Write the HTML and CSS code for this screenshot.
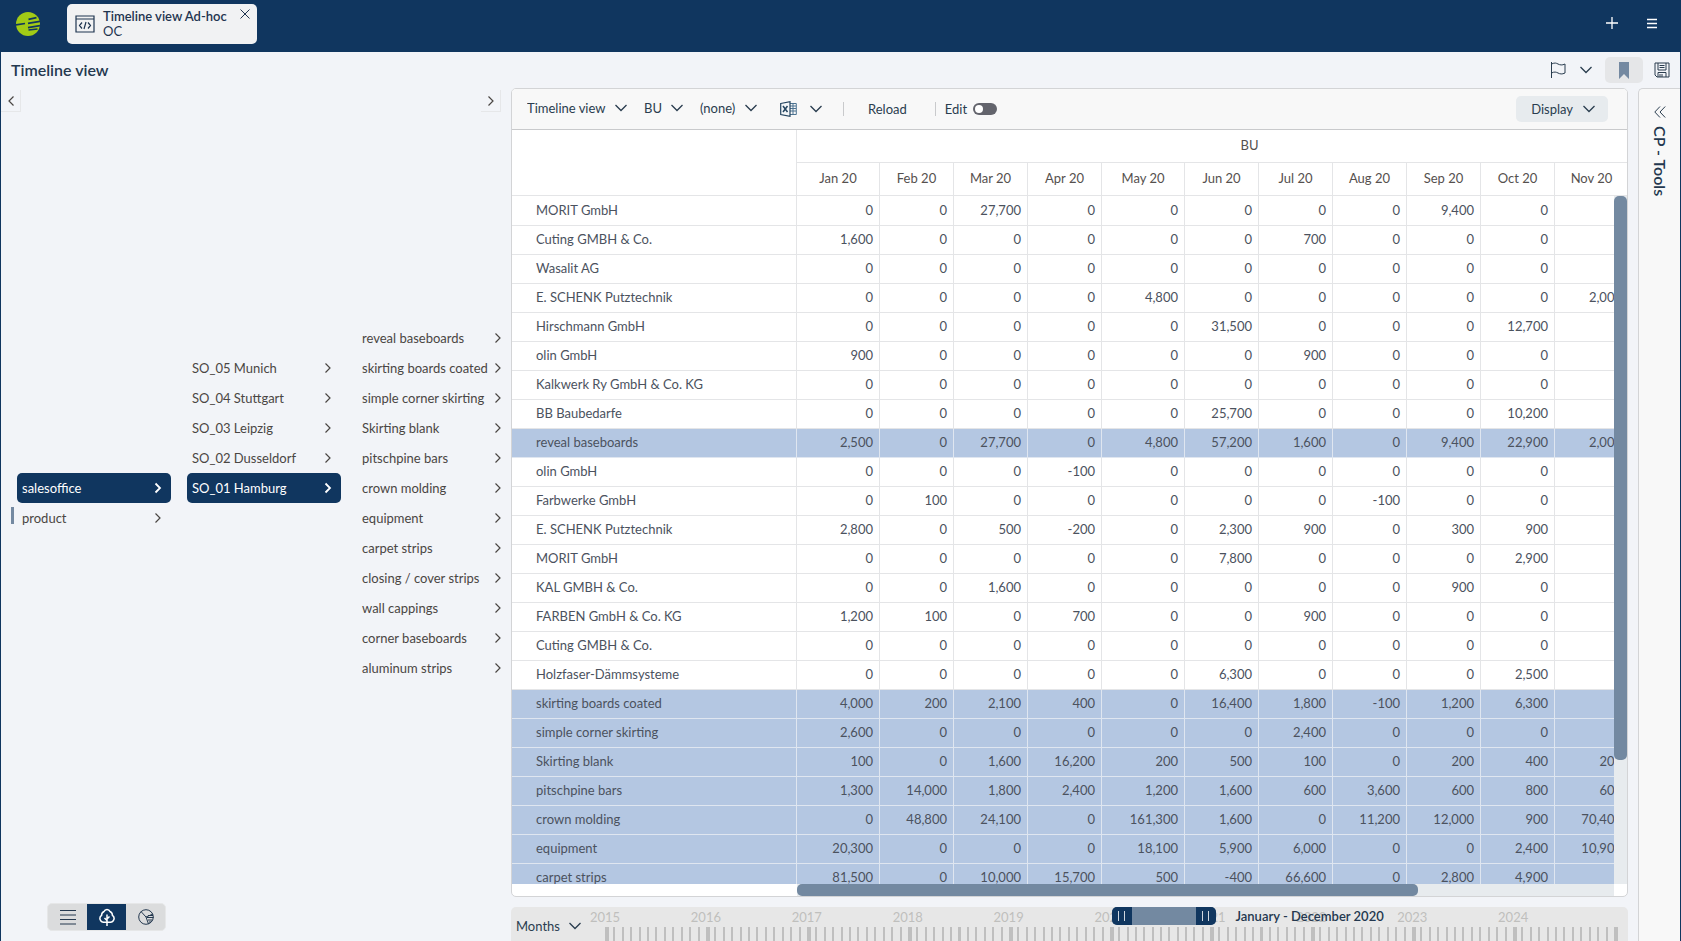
FILE: index.html
```html
<!DOCTYPE html>
<html lang="en">
<head>
<meta charset="utf-8">
<title>Timeline view</title>
<link rel="stylesheet" href="styles.css">
</head>
<body>
<svg class="sprite" aria-hidden="true">
  <symbol id="down" viewBox="0 0 12 8"><path d="M.5 1 6 6.500 11.500 1"/></symbol>
  <symbol id="right" viewBox="0 0 8 12"><path d="M1.500 1.500 6 6 1.500 10.500"/></symbol>
</svg>
<header class="topbar">
  <svg class="logo" viewBox="0 0 24 24" aria-label="Logo"><circle cx="12" cy="12" r="12" fill="#a2cb16"/><path d="M0 12.800 9 11.500M12.500 7.300 20.500 5.600M12 11.300 24 9.400M12 15.600 24 13.700M12.500 18 21.500 17" stroke="#10365f" stroke-width="1.700"/></svg>
  <div class="tab">
    <svg class="tab-icon" viewBox="0 0 20 18"><path d="M1 1H19V17H1ZM1 4H19M7 7.500 4.500 10.500 7 13.500M13 7.500 15.500 10.500 13 13.500M11 7 9 14"/></svg>
    <div class="tab-text"><strong>Timeline view Ad-hoc</strong><span>OC</span></div>
    <button class="tab-close" aria-label="Close tab"><svg viewBox="0 0 10 10"><path d="M.5.5 9.500 9.500M9.500.5.5 9.500"/></svg></button>
  </div>
  <div class="top-actions">
    <button aria-label="New tab"><svg viewBox="0 0 12 12"><path d="M6 0V12M0 6H12"/></svg></button>
    <button aria-label="Menu"><svg viewBox="0 0 12 12"><path d="M1 2.500H11M1 6.500H11M1 10.500H11"/></svg></button>
  </div>
</header>
<div class="app">
  <div class="titlebar">
    <h1>Timeline view</h1>
    <div class="title-actions">
      <button class="flag" aria-label="Flag"><svg class="i16" viewBox="0 0 16 16"><path d="M1.500 0V16M1.500 2C5 .5 6 1 8 2S12 3.500 15 2V11C12 12.500 10 12 8 11S4.500 9.500 1.500 11"/></svg></button>
      <button class="flag-menu" aria-label="Flag options"><svg class="down"><use href="#down"/></svg></button>
      <button class="bookmark" aria-label="Bookmark"><svg viewBox="0 0 10 17"><path d="M0 0H10V17L5 12 0 17Z"/></svg></button>
      <button class="save" aria-label="Save"><svg class="i16" viewBox="0 0 16 16"><path d="M1 1H15V15H3L1 13ZM4 1V8H12V1M5.500 3.500H10.500M5.500 5.500H10.500M4 15V10.500H12V15M6 12V15M8 12V15"/></svg></button>
    </div>
  </div>
  <main class="workspace">
    <nav class="tree-panel">
      <div class="tree-scroll">
        <button aria-label="Scroll left"><svg class="right flip"><use href="#right"/></svg></button>
        <button aria-label="Scroll right"><svg class="right"><use href="#right"/></svg></button>
      </div>
      <div class="tree">
        <div class="branch branch-root">
          <button class="node active">salesoffice<svg class="right"><use href="#right"/></svg></button>
          <button class="node marked">product<svg class="right"><use href="#right"/></svg></button>
        </div>
        <div class="branch branch-office">
          <button class="node">SO_05 Munich<svg class="right"><use href="#right"/></svg></button>
          <button class="node">SO_04 Stuttgart<svg class="right"><use href="#right"/></svg></button>
          <button class="node">SO_03 Leipzig<svg class="right"><use href="#right"/></svg></button>
          <button class="node">SO_02 Dusseldorf<svg class="right"><use href="#right"/></svg></button>
          <button class="node active">SO_01 Hamburg<svg class="right"><use href="#right"/></svg></button>
        </div>
        <div class="branch">
          <button class="node">reveal baseboards<svg class="right"><use href="#right"/></svg></button>
          <button class="node">skirting boards coated<svg class="right"><use href="#right"/></svg></button>
          <button class="node">simple corner skirting<svg class="right"><use href="#right"/></svg></button>
          <button class="node">Skirting blank<svg class="right"><use href="#right"/></svg></button>
          <button class="node">pitschpine bars<svg class="right"><use href="#right"/></svg></button>
          <button class="node">crown molding<svg class="right"><use href="#right"/></svg></button>
          <button class="node">equipment<svg class="right"><use href="#right"/></svg></button>
          <button class="node">carpet strips<svg class="right"><use href="#right"/></svg></button>
          <button class="node">closing / cover strips<svg class="right"><use href="#right"/></svg></button>
          <button class="node">wall cappings<svg class="right"><use href="#right"/></svg></button>
          <button class="node">corner baseboards<svg class="right"><use href="#right"/></svg></button>
          <button class="node">aluminum strips<svg class="right"><use href="#right"/></svg></button>
        </div>
      </div>
      <div class="view-switch">
        <button aria-label="List"><svg class="i16" viewBox="0 0 16 16"><path d="M0 1.500H16M0 6H16M0 10.500H16M0 15H16"/></svg></button>
        <button class="on" aria-label="Tree"><svg viewBox="0 0 16 18"><path d="M8 18V6.500M8 12.500 5.500 10M8 11 10.500 8.500M8 14.200H5.200A3.800 3.800 0 0 1 2.600 7.300 4 4 0 0 1 5 3.500 3.200 3.200 0 0 1 11 3.500 4 4 0 0 1 13.400 7.300 3.800 3.800 0 0 1 10.800 14.200Z"/></svg></button>
        <button aria-label="Chart"><svg class="i16" viewBox="0 0 16 16"><path d="M8 8 3 2.500M8 8 15 5M8 8 10.500 15M9 8.500H15.500M10 11H14.500M11 13H13M10 6.500H15"/><circle cx="8" cy="8" r="7.300"/></svg></button>
      </div>
    </nav>
    <div class="center">
      <section class="panel">
        <div class="toolbar">
          <div class="pick pick-view"><select aria-label="View"><option>Timeline view</option></select><svg class="down"><use href="#down"/></svg></div>
          <div class="pick pick-unit"><select aria-label="Unit"><option>BU</option></select><svg class="down"><use href="#down"/></svg></div>
          <div class="pick pick-filter"><select aria-label="Filter"><option>(none)</option></select><svg class="down"><use href="#down"/></svg></div>
          <button class="export" aria-label="Export to Excel"><svg class="excel" viewBox="0 0 17 16"><path d="M10 2.500H16.300V13.500H10M10 5H16M10 7.500H16M10 10H16M13 2.500V13.500" fill="none" stroke="#4d7391"/><path d="M.7 2.500 10 .7V15.300L.7 13.500Z" fill="#f4f7f9" stroke="#24445f" stroke-width="1.200"/><path d="M3 5 7.500 11M7.500 5 3 11" stroke="#24445f" stroke-width="1.500"/></svg><svg class="down"><use href="#down"/></svg></button>
          <span class="rule"></span>
          <button class="reload">Reload</button>
          <span class="rule"></span>
          <label class="edit">Edit<input type="checkbox"></label>
          <button class="display">Display<svg class="down"><use href="#down"/></svg></button>
        </div>
        <div class="sheet">
          <div class="viewport">
            <table>
              <colgroup><col class="c-name"><col class="c-wide"><col><col><col><col class="c-wide"><col><col><col><col><col><col><col></colgroup>
              <thead>
                <tr><th rowspan="2"></th><th colspan="12">BU</th></tr>
                <tr id="months"></tr>
              </thead>
              <tbody id="rows"></tbody>
            </table>
          </div>
          <div class="vbar"><div class="vthumb"></div></div>
          <div class="hbar"><div class="htrack"><div class="hthumb"></div></div></div>
        </div>
      </section>
      <section class="timeline">
        <div class="pick pick-scale"><select aria-label="Scale"><option>Months</option></select><svg class="down"><use href="#down"/></svg></div>
        <div class="years">
          <div class="year"><span>2015</span></div><div class="year"><span>2016</span></div><div class="year"><span>2017</span></div><div class="year"><span>2018</span></div><div class="year"><span>2019</span></div><div class="year"><span>2020</span></div><div class="year"><span>2021</span></div><div class="year"><span>2022</span></div><div class="year"><span>2023</span></div><div class="year"><span>2024</span></div>
          <div class="range"><div class="slider"><i></i><i></i></div><strong>January - December 2020</strong></div>
        </div>
      </section>
    </div>
    <aside class="tools">
      <button aria-label="Expand tools"><svg viewBox="0 0 12 12"><path d="M6 .5.8 6 6 11.500M11.200.5 6 6 11.200 11.500"/></svg></button>
      <h2>CP - Tools</h2>
    </aside>
  </main>
</div>
<script src="app.js"></script>
</body>
</html>
```
FILE: styles.css
```css
* { box-sizing: border-box; }
body {
  margin: 0;
  height: 100vh;
  display: flex;
  flex-direction: column;
  overflow: hidden;
  background: #f2f4f8;
  color: #2a3d4f;
  font: 13px/20px Lato, "Liberation Sans", sans-serif;
}
button, select, input { font: inherit; color: inherit; margin: 0; }
button { border: 0; padding: 0; background: none; display: flex; align-items: center; justify-content: center; }
svg { display: block; flex: none; fill: none; stroke: currentColor; }
strong { font-weight: 600; }
h1, h2 { margin: 0; font-size: 16px; font-weight: 600; color: #24384f; }
.sprite { position: absolute; width: 0; height: 0; }
.down { width: 12px; height: 8px; stroke-width: 1.3; }
.right { width: 8px; height: 12px; stroke-width: 1.2; }
.flip { transform: scaleX(-1); }
.i16 { width: 16px; height: 16px; }

.topbar { flex: none; height: 52px; display: flex; align-items: flex-start; background: #10365f; padding: 4px 23px 0 16px; }
.logo { width: 24px; height: 24px; margin: 8px 27px 0 0; stroke: none; }
.tab { display: flex; align-items: flex-start; width: 190px; height: 40px; border-radius: 5px; background: #f1f2f3; padding: 5px 7px 0 8px; color: #1f3550; }
.tab-icon { width: 20px; height: 18px; margin: 6px 8px 0 0; stroke-width: 1.2; }
.tab-text { flex: 1; display: flex; flex-direction: column; line-height: 15px; white-space: nowrap; }
.tab-close svg { width: 10px; height: 10px; }
.top-actions { margin-left: auto; display: flex; gap: 28px; padding-top: 13px; color: #fff; }
.top-actions svg { width: 12px; height: 12px; stroke-width: 1.3; }

.app { flex: 1; min-height: 0; display: flex; flex-direction: column; border: solid #10365f; border-width: 0 1px; }
.titlebar { flex: none; height: 36px; display: flex; align-items: center; justify-content: space-between; padding: 0 10px; }
.title-actions { display: flex; align-items: center; }
.flag { margin-right: 14px; }
.flag-menu { margin-right: 13px; }
.bookmark { width: 38px; height: 26px; margin-right: 11px; border-radius: 5px; background: #e5e6e8; }
.bookmark svg { width: 10px; height: 17px; fill: #7489a1; stroke: none; }

.workspace { flex: 1; min-height: 0; display: flex; }
.tree-panel { flex: none; width: 510px; display: flex; flex-direction: column; color: #4a4643; }
.tree-scroll { display: flex; justify-content: space-between; padding: 2px 10px 0 0; }
.tree-scroll button { width: 20px; height: 22px; border: solid #e6e7e9; border-width: 0 1px 1px 0; }
.tree { flex: 1; display: flex; gap: 16px; padding: 211px 0 0 16px; }
.branch { width: 154px; }
.branch-root { margin-top: 150px; }
.branch-office { margin-top: 30px; }
.node { position: relative; width: 100%; height: 30px; justify-content: space-between; padding: 0 9px 0 5px; border-radius: 5px; white-space: nowrap; }
.node.active { background: #10365f; color: #fff; }
.node.active .right { stroke-width: 1.8; }
.marked::before { content: ""; position: absolute; left: -6px; top: 4px; width: 3px; height: 17px; background: #7489a1; }
.view-switch { align-self: flex-start; display: flex; margin: 0 0 10px 46px; border: 1px solid #e6e7e8; border-radius: 5px; overflow: hidden; background: #dbdcdd; color: #24384f; }
.view-switch button { width: 39px; height: 26px; }
.view-switch .on { background: #10365f; color: #fff; }
.view-switch .on svg { width: 16px; height: 18px; stroke-width: 1.5; }

.center { flex: 1; min-width: 0; display: flex; flex-direction: column; gap: 10px; }
.panel { flex: 1; min-height: 0; display: flex; flex-direction: column; border: 1px solid #d3d4d6; border-radius: 5px; overflow: hidden; background: #fff; }
.toolbar { flex: none; height: 41px; display: flex; align-items: center; padding: 0 19px 0 15px; border-bottom: 1px solid #c9cacc; background: #f8f8f8; }
.pick { position: relative; display: flex; align-items: center; }
.toolbar .pick { padding-bottom: 2px; }
.pick select { appearance: none; border: 0; padding: 0 21px 0 0; background: none; }
.pick .down { position: absolute; right: 0; pointer-events: none; }
.pick-view, .pick-unit { margin-right: 17px; }
.pick-filter { margin-right: 23px; }
.export { gap: 13px; }
.excel { width: 17px; height: 16px; }
.rule { width: 1px; height: 14px; background: #c9cacc; }
.export + .rule { margin-left: 21px; }
.reload { margin: 0 28px 0 24px; }
.edit { display: flex; align-items: center; gap: 6px; margin-left: 9px; }
.edit input { appearance: none; width: 24px; height: 12px; border-radius: 6px; background: #63646c; display: flex; padding: 2px; }
.edit input::before { content: ""; width: 8px; height: 8px; border-radius: 50%; background: #fff; }
.display { margin-left: auto; gap: 10px; height: 26px; padding: 0 13px 0 15px; border-radius: 5px; background: #e7ebee; }

.sheet { flex: 1; min-height: 0; position: relative; display: flex; flex-direction: column; }
.viewport { flex: 1; min-height: 0; overflow: hidden; }
table { table-layout: fixed; width: 1191px; border-collapse: separate; border-spacing: 0; }
col { width: 74px; }
.c-name { width: 285px; }
.c-wide { width: 83px; }
th, td { border: solid #e4e5e7; border-width: 0 1px 1px 0; font-weight: 400; padding: 0 6px 2px; white-space: nowrap; }
thead th { height: 33px; color: #55504e; }
tbody th { text-align: left; padding-left: 24px; }
tbody th, td { height: 29px; color: #4b525e; }
tbody tr:first-child > * { height: 30px; }
td { text-align: right; }
.sum > * { background: #b4c7e2; border-color: #dfe6f0; }
.vbar { position: absolute; top: 66px; right: 0; bottom: 12px; width: 13px; background: #e7ebee; }
.vthumb { height: 82%; border-radius: 5px; background: #7389a1; }
.hbar { flex: none; height: 12px; padding: 0 13px 0 285px; }
.htrack { background: #e7ebee; }
.hthumb { width: 76%; height: 12px; border-radius: 5px; background: #7389a1; }

.timeline { flex: none; height: 34px; display: flex; padding: 0 10px 0 5px; border-radius: 5px 5px 0 0; background: #e7e7e7; }
.pick-scale { width: 65px; height: 38px; }
.years { flex: 1; position: relative; display: flex; margin-left: 24px; color: #bfbfbd; }
.years::after { content: ""; width: 4px; height: 14px; align-self: flex-end; background: #bfbfbf; }
.year { flex: 1; display: flex; flex-direction: column; }
.year span { width: 40px; height: 20px; margin-left: -20px; text-align: center; }
.year::after {
  content: "";
  height: 14px;
  border-left: 4px solid #bfbfbf;
  background: repeating-linear-gradient(to right, #bfbfbf 0 2px, transparent 2px calc(100% / 12)) border-box;
}
.range { position: absolute; left: 50%; top: 0; display: flex; align-items: flex-start; gap: 20px; color: #24384f; line-height: 18px; white-space: nowrap; }
.slider { display: flex; justify-content: space-between; width: 104px; height: 18px; border-radius: 5px; overflow: hidden; background: #7389a1; }
.slider i { width: 20px; display: flex; align-items: center; justify-content: center; background: #10365f; }
.slider i::before { content: ""; width: 5px; height: 10px; border: solid #cfd6de; border-width: 0 1px; }

.tools { flex: none; width: 42px; margin-left: 10px; display: flex; flex-direction: column; align-items: center; gap: 8px; padding-top: 17px; border: solid #d3d4d6; border-width: 1px 0 0 1px; border-radius: 5px 0 0 0; background: #f8f8f8; }
.tools svg { width: 12px; height: 12px; }
.tools h2 { writing-mode: vertical-rl; line-height: 20px; }
```
FILE: app.js
```js
const months = ["Jan", "Feb", "Mar", "Apr", "May", "Jun", "Jul", "Aug", "Sep", "Oct", "Nov", "Dec"];

// A leading "*" marks a subtotal row.
const data = [
  ["MORIT GmbH", 0, 0, 27700, 0, 0, 0, 0, 0, 9400, 0, null],
  ["Cuting GMBH & Co.", 1600, 0, 0, 0, 0, 0, 700, 0, 0, 0, null],
  ["Wasalit AG", 0, 0, 0, 0, 0, 0, 0, 0, 0, 0, null],
  ["E. SCHENK Putztechnik", 0, 0, 0, 0, 4800, 0, 0, 0, 0, 0, 2000],
  ["Hirschmann GmbH", 0, 0, 0, 0, 0, 31500, 0, 0, 0, 12700, null],
  ["olin GmbH", 900, 0, 0, 0, 0, 0, 900, 0, 0, 0, null],
  ["Kalkwerk Ry GmbH & Co. KG", 0, 0, 0, 0, 0, 0, 0, 0, 0, 0, null],
  ["BB Baubedarfe", 0, 0, 0, 0, 0, 25700, 0, 0, 0, 10200, null],
  ["*reveal baseboards", 2500, 0, 27700, 0, 4800, 57200, 1600, 0, 9400, 22900, 2000],
  ["olin GmbH", 0, 0, 0, -100, 0, 0, 0, 0, 0, 0, null],
  ["Farbwerke GmbH", 0, 100, 0, 0, 0, 0, 0, -100, 0, 0, null],
  ["E. SCHENK Putztechnik", 2800, 0, 500, -200, 0, 2300, 900, 0, 300, 900, null],
  ["MORIT GmbH", 0, 0, 0, 0, 0, 7800, 0, 0, 0, 2900, null],
  ["KAL GMBH & Co.", 0, 0, 1600, 0, 0, 0, 0, 0, 900, 0, null],
  ["FARBEN GmbH & Co. KG", 1200, 100, 0, 700, 0, 0, 900, 0, 0, 0, null],
  ["Cuting GMBH & Co.", 0, 0, 0, 0, 0, 0, 0, 0, 0, 0, null],
  ["Holzfaser-Dämmsysteme", 0, 0, 0, 0, 0, 6300, 0, 0, 0, 2500, null],
  ["*skirting boards coated", 4000, 200, 2100, 400, 0, 16400, 1800, -100, 1200, 6300, null],
  ["*simple corner skirting", 2600, 0, 0, 0, 0, 0, 2400, 0, 0, 0, null],
  ["*Skirting blank", 100, 0, 1600, 16200, 200, 500, 100, 0, 200, 400, 200],
  ["*pitschpine bars", 1300, 14000, 1800, 2400, 1200, 1600, 600, 3600, 600, 800, 600],
  ["*crown molding", 0, 48800, 24100, 0, 161300, 1600, 0, 11200, 12000, 900, 70400],
  ["*equipment", 20300, 0, 0, 0, 18100, 5900, 6000, 0, 0, 2400, 10900],
  ["*carpet strips", 81500, 0, 10000, 15700, 500, -400, 66600, 0, 2800, 4900, null]
];

function cell(tag, text, scope) {
  const el = document.createElement(tag);
  el.textContent = text;
  if (scope) el.scope = scope;
  return el;
}

const head = document.getElementById("months");
months.forEach(m => head.append(cell("th", m + " 20", "col")));

const body = document.getElementById("rows");
data.forEach(([name, ...values]) => {
  const tr = document.createElement("tr");
  if (name[0] === "*") tr.className = "sum";
  tr.append(cell("th", name.replace("*", ""), "row"));
  months.forEach((m, i) => {
    const v = values[i];
    tr.append(cell("td", v == null ? "" : v.toLocaleString("en-US")));
  });
  body.append(tr);
});
```
